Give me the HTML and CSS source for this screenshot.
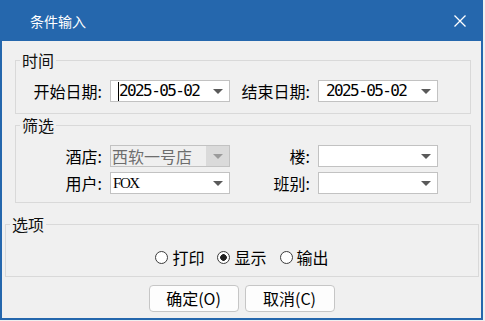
FILE: index.html
```html
<!DOCTYPE html>
<html lang="zh-CN">
<head>
    <meta charset="UTF-8">
    <title>条件输入</title>
    <link rel="stylesheet" href="styles.css">
</head>
<body>
    <div class="window">
        <div class="titlebar">
            <span class="title">条件输入</span>
            <svg class="close" width="12" height="12" viewBox="0 0 12 12">
                <path d="M0.5 0.5 L11.5 11.5 M11.5 0.5 L0.5 11.5" stroke="#fff" stroke-width="1.3" fill="none"/>
            </svg>
        </div>

        <fieldset class="group group-time">
            <legend>时间</legend>
            <div class="fields">
                <label class="field-label">开始日期:</label>
                <div class="combo date">
                    <span class="caret"></span>
                    <span class="value">2025-05-02</span>
                    <span class="drop"><span class="arrow"></span></span>
                </div>
                <label class="field-label">结束日期:</label>
                <div class="combo date">
                    <span class="value">2025-05-02</span>
                    <span class="drop"><span class="arrow"></span></span>
                </div>
            </div>
        </fieldset>

        <fieldset class="group group-filter">
            <legend>筛选</legend>
            <div class="fields">
                <label class="field-label">酒店:</label>
                <div class="combo plain disabled">
                    <span class="value">西软一号店</span>
                    <span class="drop"><span class="arrow"></span></span>
                </div>
                <label class="field-label">楼:</label>
                <div class="combo plain">
                    <span class="value"></span>
                    <span class="drop"><span class="arrow"></span></span>
                </div>
                <label class="field-label">用户:</label>
                <div class="combo plain">
                    <span class="value code">FOX</span>
                    <span class="drop"><span class="arrow"></span></span>
                </div>
                <label class="field-label">班别:</label>
                <div class="combo plain">
                    <span class="value"></span>
                    <span class="drop"><span class="arrow"></span></span>
                </div>
            </div>
        </fieldset>

        <fieldset class="group group-options">
            <legend>选项</legend>
            <div class="radios">
                <span class="radio"><span class="dot"></span>打印</span>
                <span class="radio checked"><span class="dot"></span>显示</span>
                <span class="radio"><span class="dot"></span>输出</span>
            </div>
        </fieldset>

        <div class="buttons">
            <button type="button" class="btn">确定(O)</button>
            <button type="button" class="btn">取消(C)</button>
        </div>
    </div>
</body>
</html>
```

FILE: styles.css
```css
:root {
    --title-blue: #2567ad;
    --panel-bg: #f0f0f0;
    --group-border: #d9d9d9;
    --combo-border: #c2c2c2;
    --arrow-color: #5a5a5a;
}

* {
    box-sizing: border-box;
}

body {
    margin: 0;
    background-color: var(--panel-bg);
    font-family: "Noto Sans CJK SC", "Noto Sans", sans-serif;
    font-size: 16px;
    color: #000;
}

.window {
    width: 483px;
    height: 320px;
    border: 2px solid var(--title-blue);
    border-top: 0;
    background-color: var(--panel-bg);
    display: flex;
    flex-direction: column;
}

.titlebar {
    height: 41px;
    flex: none;
    background-color: var(--title-blue);
    color: #fff;
    font-size: 14px;
    display: flex;
    align-items: center;
    justify-content: space-between;
    padding: 0 15px 0 28px;
}

.close {
    display: block;
}

/* --- group boxes --- */

.group {
    border: 1px solid var(--group-border);
    margin: 0;
    min-width: 0;
    padding: 0;
}

.group legend {
    margin-left: 4px;
    padding: 0 2px;
    font-size: 16px;
    line-height: 20px;
    color: #111;
}

.group-time {
    width: 456px;
    margin: 9px 0 0 13px;
    padding: 10px 0 11px;
}

.group-filter {
    width: 456px;
    margin: 1px 0 0 13px;
    padding: 10px 0 8px;
}

.group-options {
    width: 474px;
    margin: 11px 0 0 3px;
    padding: 13px 0 9px;
}

.fields {
    display: grid;
    grid-template-columns: 88px 120px 76px 120px;
    column-gap: 6px;
    row-gap: 5px;
}

.field-label {
    text-align: right;
    line-height: 22px;
    white-space: nowrap;
    padding-right: 2px;
}

/* --- combo boxes --- */

.combo {
    height: 22px;
    border: 1px solid var(--combo-border);
    background-color: #fff;
    display: flex;
    align-items: center;
    overflow: hidden;
}

.combo.date {
    padding-left: 7px;
}

.combo.plain {
    padding-left: 1px;
}

.combo .value {
    flex: 1;
    white-space: nowrap;
    line-height: 20px;
}

.combo.date .value {
    font-family: "DejaVu Sans Mono", monospace;
    letter-spacing: -1.6px;
}

.combo .value.code {
    font-family: "Liberation Serif", serif;
    font-size: 15px;
    letter-spacing: -1.4px;
    padding-left: 1px;
}

.caret {
    width: 1px;
    height: 19px;
    background-color: #000;
    flex: none;
}

.drop {
    width: 23px;
    height: 100%;
    flex: none;
    display: flex;
    align-items: center;
    justify-content: center;
}

.arrow {
    width: 0;
    height: 0;
    border-left: 5px solid transparent;
    border-right: 5px solid transparent;
    border-top: 5px solid var(--arrow-color);
}

.combo.disabled {
    background-color: #efefef;
    color: #6d6d6d;
}

.combo.disabled .drop {
    background-color: #dadada;
}

.combo.disabled .arrow {
    border-top-color: #9b9b9b;
}

/* --- radios --- */

.radios {
    display: flex;
    justify-content: center;
    gap: 13px;
    line-height: 20px;
}

.radio {
    display: flex;
    align-items: center;
    gap: 4px;
}

.radio .dot {
    width: 13px;
    height: 13px;
    border: 1px solid #3c3c3c;
    border-radius: 50%;
    background-color: #fff;
}

.radio.checked .dot {
    background: radial-gradient(circle, #222 3px, #fff 3.6px);
}

/* --- buttons --- */

.buttons {
    display: flex;
    justify-content: center;
    gap: 6px;
    margin-top: 8px;
}

.btn {
    width: 90px;
    height: 27px;
    border: 1px solid #c6c6c6;
    border-radius: 4px;
    background-color: #fdfdfd;
    font-family: "Noto Sans CJK SC", "Noto Sans", sans-serif;
    font-size: 16px;
    color: #000;
    padding: 0;
    line-height: 25px;
}
```
